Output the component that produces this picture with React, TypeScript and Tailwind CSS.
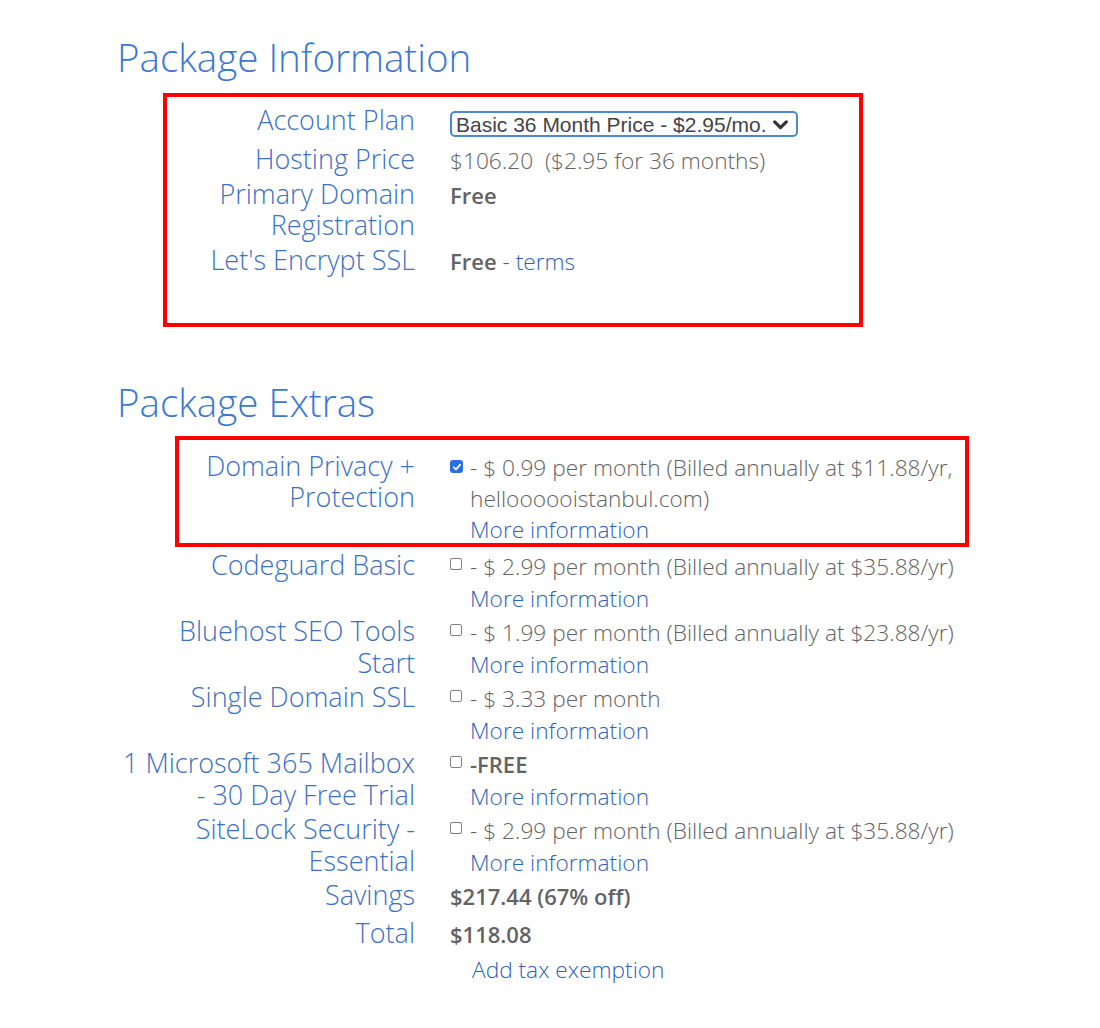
import { type FC, type ReactNode } from "react";

const FONT = { fontFamily: '"Open Sans", "Liberation Sans", sans-serif' };

interface RowProps {
  label: string[];
  labelWidth: string;
  leading: string;
  className?: string;
  children: ReactNode;
}

const Row: FC<RowProps> = ({ label, labelWidth, leading, className, children }) => {
  return (
    <div className={`flex items-start ${className ?? ""}`}>
      <div className={`${labelWidth} ${leading} shrink-0 text-right text-[27px] font-light text-[#3b71c3]`}>
        {label.map((line) => (
          <div key={line} className="whitespace-nowrap">
            {line}
          </div>
        ))}
      </div>
      <div className={`-mb-[2px] pl-[35px] pt-[2px] ${leading} text-[22.7px] font-[350] text-[#636363]`}>{children}</div>
    </div>
  );
};

const Strong: FC<{ children: ReactNode }> = ({ children }) => (
  <span className="text-[22px] leading-none font-semibold">{children}</span>
);

const Checkbox: FC<{ checked?: boolean }> = ({ checked }) =>
  checked ? (
    <span className="mt-[8px] flex h-[13px] w-[13px] shrink-0 items-center justify-center rounded-[3px] bg-[#2a6fe0]">
      <svg viewBox="0 0 12 12" className="h-[10px] w-[10px]">
        <path d="M2.2 6.3 4.8 8.8 9.8 3.2" fill="none" stroke="white" strokeWidth="2" strokeLinecap="round" strokeLinejoin="round" />
      </svg>
    </span>
  ) : (
    <span className="mr-[1px] mt-[6.5px] h-[12px] w-[12px] shrink-0 rounded-[2px] border border-[#808080]" />
  );

const MoreInfo = () => <div className="text-[#2d63b9]">More information</div>;

interface ExtraProps {
  checked?: boolean;
  lines: ReactNode[];
}

const ExtraValue: FC<ExtraProps> = ({ checked, lines }) => (
  <div className="flex items-start">
    <Checkbox checked={checked} />
    <div className="ml-[7px] w-[510px]">
      {lines.map((line, i) => (
        <div key={i} className="whitespace-nowrap">
          {line}
        </div>
      ))}
      <MoreInfo />
    </div>
  </div>
);

const extras = [
  { label: ["Codeguard Basic"], lines: ["- $ 2.99 per month (Billed annually at $35.88/yr)"] },
  { label: ["Bluehost SEO Tools", "Start"], lines: ["- $ 1.99 per month (Billed annually at $23.88/yr)"] },
  { label: ["Single Domain SSL"], lines: ["- $ 3.33 per month"] },
  { label: ["1 Microsoft 365 Mailbox", "- 30 Day Free Trial"], lines: [<Strong>-FREE</Strong>] },
  { label: ["SiteLock Security -", "Essential"], lines: ["- $ 2.99 per month (Billed annually at $35.88/yr)"] },
];

export default function App() {
  return (
    <div className="min-h-[1028px] w-[1100px] bg-white pl-[117px] pt-[34px]" style={FONT}>
      <h1 className="text-[38.5px] leading-[46px] font-light text-[#3a78d4]">Package Information</h1>

      <div className="ml-[46px] mt-[13px] h-[234px] w-[700px] border-4 border-[#ff0000] pt-[7px]">
        <Row label={["Account Plan"]} labelWidth="w-[248px]" leading="leading-[31px]" className="h-[38.5px]">
          <div className="-mt-[2px] pt-[7px]">
            <div
              className="flex h-[26px] w-[348px] items-center rounded-[5px] border-2 border-[#4a88d6] pl-[4px] pr-[6px] text-[21px] font-normal leading-none text-[#444]"
              style={{ fontFamily: '"Liberation Sans", Arial, sans-serif' }}
            >
              <span className="whitespace-nowrap">Basic 36 Month Price - $2.95/mo.</span>
              <svg viewBox="0 0 16 16" className="ml-[6px] h-[17px] w-[17px]">
                <path d="M2.5 5.5 8 11 13.5 5.5" fill="none" stroke="#333" strokeWidth="3" strokeLinecap="round" strokeLinejoin="round" />
              </svg>
            </div>
          </div>
        </Row>
        <Row label={["Hosting Price"]} labelWidth="w-[248px]" leading="leading-[31px]" className="mb-[4.5px]">
          <span className="whitespace-pre">$106.20  ($2.95 for 36 months)</span>
        </Row>
        <Row label={["Primary Domain", "Registration"]} labelWidth="w-[248px]" leading="leading-[31px]" className="mb-[3.5px]">
          <Strong>Free</Strong>
        </Row>
        <Row label={["Let's Encrypt SSL"]} labelWidth="w-[248px]" leading="leading-[31px]">
          <Strong>Free</Strong> - <span className="text-[#2d63b9]">terms</span>
        </Row>
      </div>

      <h2 className="mt-[52px] text-[38.5px] leading-[46px] font-light text-[#3a78d4]">Package Extras</h2>

      <div className="ml-[58px] mt-[11px] h-[111px] w-[794px] border-4 border-[#ff0000] pt-[10px]">
        <Row label={["Domain Privacy +", "Protection"]} labelWidth="w-[236px]" leading="leading-[31px]">
          <ExtraValue checked lines={["- $ 0.99 per month (Billed annually at $11.88/yr,", "helloooooistanbul.com)"]} />
        </Row>
      </div>

      <div className="mt-[2px] flex flex-col gap-[2px]">
        {extras.map((extra) => (
          <Row key={extra.label[0]} label={extra.label} labelWidth="w-[298px]" leading="leading-[32px]">
            <ExtraValue lines={extra.lines} />
          </Row>
        ))}
        <Row label={["Savings"]} labelWidth="w-[298px]" leading="leading-[32px]" className="mb-[4px]">
          <Strong>$217.44 (67% off)</Strong>
        </Row>
        <Row label={["Total"]} labelWidth="w-[298px]" leading="leading-[32px]" className="mb-[1px]">
          <Strong>$118.08</Strong>
        </Row>
        <Row label={[""]} labelWidth="w-[298px]" leading="leading-[32px]">
          <div className="pl-[22px] text-[#2d63b9]">Add tax exemption</div>
        </Row>
      </div>
    </div>
  );
}
